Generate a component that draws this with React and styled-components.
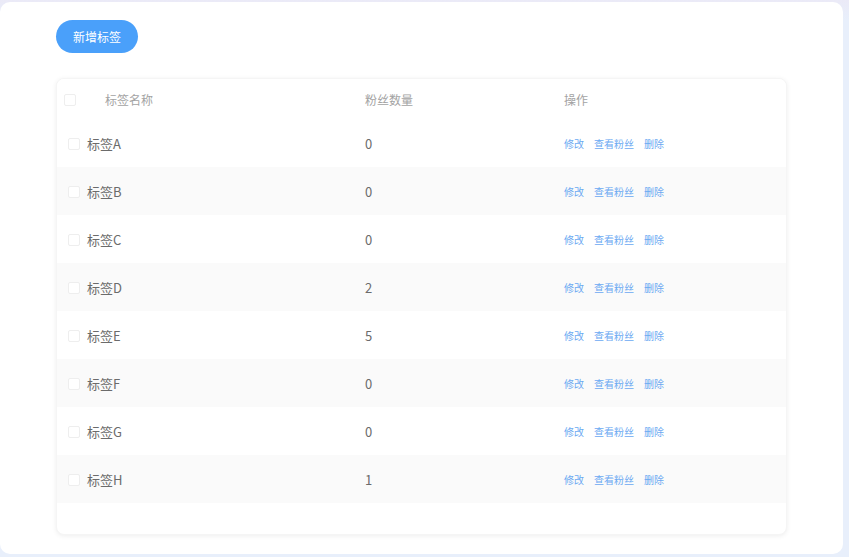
import React from "react";
import styled, { createGlobalStyle } from "styled-components";

const Global = createGlobalStyle`
  html, body {
    margin: 0;
    padding: 0;
    background: #e8effb;
  }
  body {
    font-family: "Noto Sans CJK SC", "Noto Sans", sans-serif;
  }
`;

const Page = styled.div`
  width: 849px;
  height: 557px;
  overflow: hidden;
  background: linear-gradient(#ebeaf7, #e8effb 20px);
  padding-top: 2px;
  box-sizing: border-box;
`;

const Panel = styled.div`
  width: 843px;
  height: 552px;
  background: #fff;
  border-radius: 10px;
  padding: 18px 0 0 56px;
  box-sizing: border-box;
`;

const AddButton = styled.button`
  height: 33px;
  padding: 0 17px;
  border: none;
  border-radius: 17px;
  background: #4aa0fa;
  color: #fff;
  font-family: inherit;
  font-size: 12px;
  cursor: pointer;
`;

const Card = styled.div`
  margin-top: 25px;
  width: 731px;
  height: 457px;
  border-radius: 8px;
  background: #fff;
  box-shadow: 0 1px 5px rgba(0, 0, 0, 0.07);
  border: 1px solid #f5f5f5;
  box-sizing: border-box;
  overflow: hidden;
`;

const Row = styled.div`
  display: grid;
  grid-template-columns: 308px 199px 1fr;
  align-items: center;
  height: ${(p) => (p.$head ? "40px" : "48px")};
  background: ${(p) => (p.$striped ? "#fafafa" : "#fff")};
  font-size: ${(p) => (p.$head ? "12px" : "13px")};
  color: ${(p) => (p.$head ? "#a3a3a3" : "#6b6b6b")};
`;

const NameCell = styled.div`
  display: flex;
  align-items: center;
  padding-left: ${(p) => (p.$head ? "7px" : "11px")};
  gap: ${(p) => (p.$head ? "29px" : "7px")};
`;

const Check = styled.span`
  width: 12px;
  height: 12px;
  margin-top: 2px;
  border: 1px solid #eeeeee;
  border-radius: 2px;
  background: #fff;
  box-sizing: border-box;
`;

const Actions = styled.div`
  display: flex;
  gap: 10px;
  font-size: 10px;
  color: #6ba9f2;
`;

const Link = styled.span`
  cursor: pointer;
`;

const tags = [
  ["标签A", 0],
  ["标签B", 0],
  ["标签C", 0],
  ["标签D", 2],
  ["标签E", 5],
  ["标签F", 0],
  ["标签G", 0],
  ["标签H", 1],
];

export default function App() {
  return (
    <Page>
      <Global />
      <Panel>
        <AddButton>新增标签</AddButton>
        <Card>
          <Row $head>
            <NameCell $head>
              <Check />
              <span>标签名称</span>
            </NameCell>
            <div>粉丝数量</div>
            <div>操作</div>
          </Row>
          {tags.map(([name, count], i) => (
            <Row key={name} $striped={i % 2 === 1}>
              <NameCell>
                <Check />
                <span>{name}</span>
              </NameCell>
              <div>{count}</div>
              <Actions>
                <Link>修改</Link>
                <Link>查看粉丝</Link>
                <Link>删除</Link>
              </Actions>
            </Row>
          ))}
        </Card>
      </Panel>
    </Page>
  );
}
